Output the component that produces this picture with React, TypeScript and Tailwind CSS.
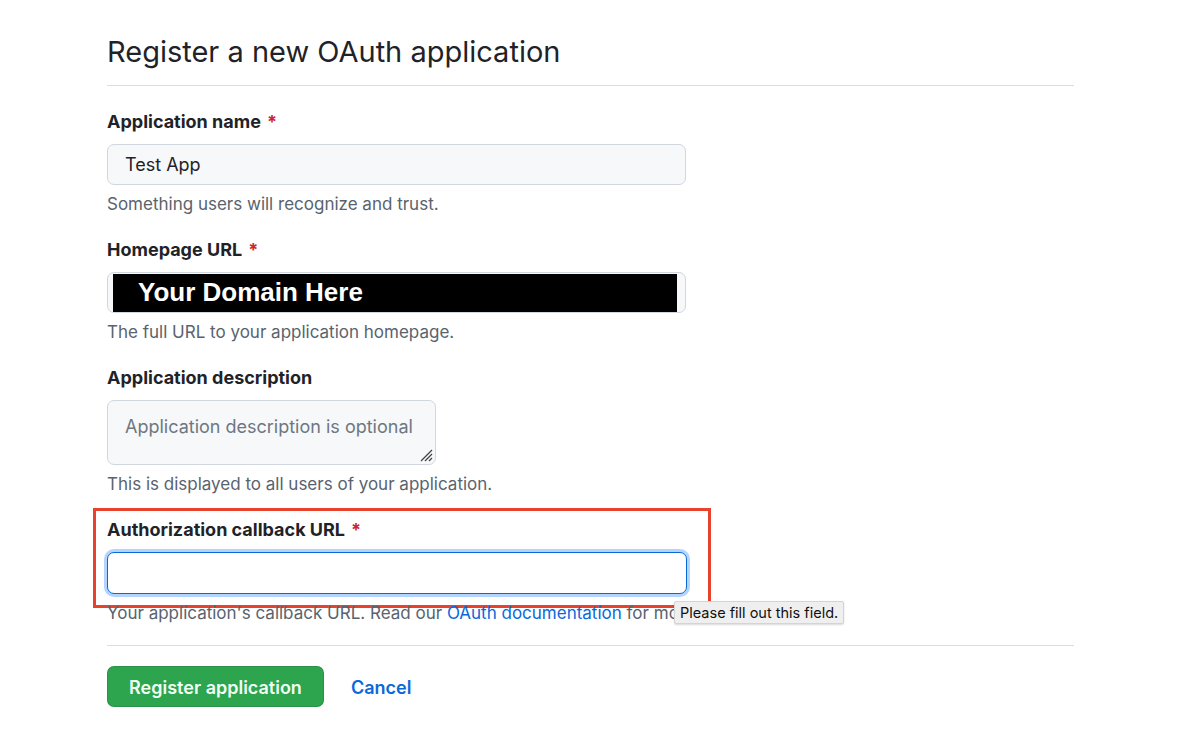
const font = { fontFamily: 'Inter, "Liberation Sans", Arial, sans-serif' }

function Label({ text, required }: { text: string; required?: boolean }) {
  return (
    <div className="text-[18px] leading-[22px] font-bold text-[#1f2328]">
      {text}
      {required && <span className="ml-[6px] text-[#cf222e]">*</span>}
    </div>
  )
}

function Note({ children }: { children: React.ReactNode }) {
  return <div className="mt-[9px] text-[17px] leading-[20px] text-[#59636e]">{children}</div>
}

export default function App() {
  return (
    <div className="min-h-[747px] w-[1200px] bg-white" style={font}>
      <div className="ml-[107px] w-[967px] pt-[33px]">
        <h2 className="pb-[14px] text-[29px] leading-[38px] font-normal text-[#1f2328] border-b border-[#d8dee4]">
          Register a new OAuth application
        </h2>

        <div className="pt-[25px]">
          <Label text="Application name" required />
          <div className="mt-[11px] flex h-[41px] w-[579px] items-center rounded-[7px] border border-[#d0d7de] bg-[#f6f8fa] px-[17px] text-[18px] text-[#1f2328]">
            Test App
          </div>
          <Note>Something users will recognize and trust.</Note>
        </div>

        <div className="pt-[25px]">
          <Label text="Homepage URL" required />
          <div className="mt-[11px] flex h-[41px] w-[579px] items-center rounded-[7px] border border-[#d0d7de] bg-[#f6f8fa] pl-[5px] pr-[8px]">
            <div
              className="flex h-[38px] w-full items-center bg-black pl-[25px] text-[26px] font-bold text-white"
              style={{ fontFamily: '"Liberation Sans", Arial, sans-serif' }}
            >
              Your Domain Here
            </div>
          </div>
          <Note>The full URL to your application homepage.</Note>
        </div>

        <div className="pt-[25px]">
          <Label text="Application description" />
          <div className="relative mt-[11px] h-[65px] w-[329px] rounded-[7px] border border-[#d0d7de] bg-[#f6f8fa] px-[17px] pt-[14px] text-[18px] leading-[24px] text-[#6e7781]">
            Application description is optional
            <svg className="absolute bottom-[2px] right-[2px]" width="14" height="14" viewBox="0 0 14 14">
              <path d="M13 2 L2 13 M13 6 L6 13 M13 10 L10 13" stroke="#444" strokeWidth="1.3" />
            </svg>
          </div>
          <Note>This is displayed to all users of your application.</Note>
        </div>

        <div className="relative mt-[14px]">
          <div className="-ml-[14px] w-[618px] border-[3px] border-[#e8412c] px-[11px] pt-[8px] pb-[11px]">
            <Label text="Authorization callback URL" required />
            <div className="mt-[11px] h-[42px] w-[580px] rounded-[7px] border-[1.5px] border-[#0969da] bg-white shadow-[0_0_0_3px_rgba(84,160,255,0.45)]" />
          </div>
          <div className="-mt-[5px] whitespace-nowrap text-[17px] leading-[20px] text-[#59636e]">
            Your application's callback URL. Read our{' '}
            <span className="text-[#0969da]">OAuth documentation</span> for more information.
          </div>
          <div className="absolute left-[567px] top-[93px] flex h-[23px] items-center rounded-[2px] border border-[#d4d4d4] bg-[#efefef] px-[5px] text-[14.5px] text-[#111] shadow-[0_1px_2px_rgba(0,0,0,0.15)]">
            Please fill out this field.
          </div>
        </div>

        <div className="mt-[22px] border-t border-[#d8dee4] pt-[20px]">
          <div className="flex items-center gap-[27px]">
            <button className="h-[41px] w-[217px] rounded-[7px] border border-[rgba(31,35,40,0.15)] bg-[#2da44e] pt-[1px] text-[18px] font-semibold text-[#f0fff4]">
              Register application
            </button>
            <span className="pt-[1px] text-[18px] font-semibold text-[#0969da]">Cancel</span>
          </div>
        </div>
      </div>
    </div>
  )
}
